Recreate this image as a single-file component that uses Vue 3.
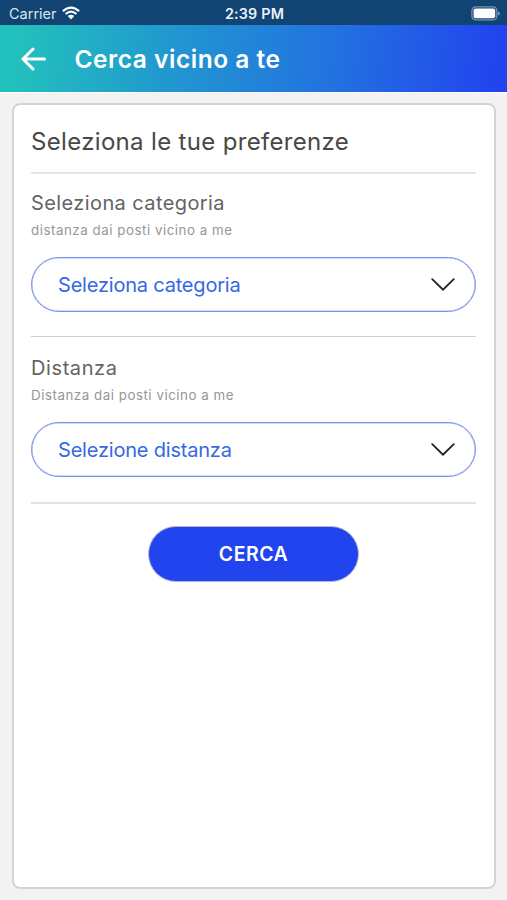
<script setup>
const fields = [
  { title: 'Seleziona categoria', hint: 'distanza dai posti vicino a me', value: 'Seleziona categoria', key: 'category' },
  { title: 'Distanza', hint: 'Distanza dai posti vicino a me', value: 'Selezione distanza', key: 'distance' },
]
</script>

<template>
  <div class="screen">
    <div class="status">
      <div class="carrier">
        <span class="carrier-name">Carrier</span>
        <svg class="wifi" width="18" height="14" viewBox="0 0 18 14">
          <path d="M0.9 5.1Q9-2 17.1 5.1" />
          <path d="M3.6 8Q9 3.4 14.4 8" />
          <path class="dot" d="M5.8 10Q9 7.3 12.2 10L9 13.4Z" />
        </svg>
      </div>
      <span class="time">2:39 PM</span>
      <svg class="battery" width="29" height="15" viewBox="0 0 29 15">
        <rect class="shell" x="0.9" y="0.9" width="25" height="13" rx="4" />
        <rect class="charge" x="2.6" y="2.6" width="21.6" height="9.6" rx="2" />
        <path class="tip" d="M27 5.2Q29 6 29 7.4T27 9.6Z" />
      </svg>
    </div>

    <header class="header">
      <svg class="back" width="26" height="24" viewBox="0 0 26 24">
        <path d="M23.5 12H2M12 2L2 12L12 22" />
      </svg>
      <h1 class="page-title">Cerca vicino a te</h1>
    </header>

    <main class="card">
      <h2 class="heading">Seleziona le tue preferenze</h2>
      <section v-for="field in fields" :key="field.key" class="field" :class="field.key">
        <div class="label"><span>{{ field.title }}</span></div>
        <div class="hint"><span>{{ field.hint }}</span></div>
        <button class="select">
          <span class="value">{{ field.value }}</span>
          <svg class="chevron" width="24" height="14" viewBox="0 0 24 14">
            <path d="M1.2 1.2L12 11.7L22.8 1.2" />
          </svg>
        </button>
      </section>
      <button class="submit">CERCA</button>
    </main>
  </div>
</template>

<style>
body {
  background: #f2f2f2;
}
</style>

<style scoped>
.screen {
  box-sizing: border-box;
  height: 900px;
  display: flex;
  flex-direction: column;
  background: #f2f2f2;
  font-family: Inter, "Liberation Sans", sans-serif;
  overflow: hidden;
}
.status {
  height: 25px;
  box-sizing: border-box;
  padding: 2px 7px 0 9px;
  display: grid;
  grid-template-columns: 1fr auto 1fr;
  align-items: center;
  background: #124473;
  color: #fff;
}
.carrier {
  display: flex;
  align-items: center;
  gap: 5px;
}
.carrier-name {
  font-size: 14.5px;
  line-height: 20px;
  color: #d7e4f0;
}
.wifi {
  margin-top: -1px;
  fill: none;
  stroke: #fff;
  stroke-width: 2.1;
}
.wifi .dot {
  fill: #fff;
  stroke: none;
}
.time {
  font-size: 14.3px;
  font-weight: 600;
  letter-spacing: 0.2px;
  color: #e9f2f8;
}
.battery {
  justify-self: end;
  margin-right: 0.5px;
}
.shell {
  fill: none;
  stroke: #7795b0;
  stroke-width: 1.3;
}
.charge {
  fill: #fff;
}
.tip {
  fill: #7795b0;
}
.header {
  height: 67px;
  padding-left: 21px;
  display: flex;
  align-items: center;
  gap: 27.5px;
  background: linear-gradient(95deg, #22c0bd 4%, #2196d0 35%, #2274df 64%, #2244ee 98%);
  box-shadow: 0 1px 1px #fff;
  color: #fff;
}
.back {
  margin-top: 1px;
  fill: none;
  stroke: #fff;
  stroke-width: 3;
  stroke-linecap: round;
  stroke-linejoin: round;
}
.page-title {
  margin: 0;
  padding-top: 1px;
  font-size: 24.5px;
  line-height: 30px;
  font-weight: 600;
  letter-spacing: 0.52px;
  white-space: nowrap;
}
.card {
  box-sizing: border-box;
  width: 484px;
  height: 786px;
  margin: 11px 0 0 12px;
  padding: 0 18px;
  border: 2px solid #d4d4d4;
  border-radius: 8px;
  background: #fff;
  display: flex;
  flex-direction: column;
}
.heading {
  box-sizing: border-box;
  height: 69px;
  padding-top: 22px;
  border-bottom: 2px solid #e6e6e6;
  font-size: 24px;
  line-height: 30px;
  font-weight: 400;
  letter-spacing: 0.33px;
  color: #484848;
  white-space: nowrap;
}
.heading,
.field {
  margin: 0 0 0 -1px;
}
.field {
  box-sizing: border-box;
  height: 163px;
  padding-top: 16px;
  display: flex;
  flex-direction: column;
  border-bottom: 1px solid #d2d2d2;
}
.distance {
  height: 167px;
  padding-top: 18px;
  border-bottom: 2px solid #e3e3e3;
}
.label {
  height: 27px;
  font-size: 20px;
  line-height: 27px;
  letter-spacing: 0.4px;
  color: #646464;
}
.distance .label {
  letter-spacing: 0.6px;
}
.hint {
  height: 26px;
  font-size: 13.3px;
  line-height: 26px;
  letter-spacing: 0.54px;
  color: #969696;
}
.select {
  box-sizing: border-box;
  height: 55px;
  margin-top: 14px;
  padding: 1px 20px 0 26px;
  border: 1px solid #7d8fea;
  box-shadow: inset 0 0 0 0.6px #a9b5f2;
  border-radius: 28px;
  background: #fff;
  display: flex;
  flex-shrink: 0;
  align-items: center;
  justify-content: space-between;
  font-family: Inter, "Liberation Sans", sans-serif;
}
.value {
  font-size: 20px;
  line-height: 28px;
  letter-spacing: -0.2px;
  color: #3568e3;
}
.chevron {
  fill: none;
  stroke: #222;
  stroke-width: 1.8;
  stroke-linecap: round;
}
.submit {
  box-sizing: border-box;
  align-self: center;
  width: 211px;
  height: 56px;
  margin: 22px 1px 0 0;
  padding: 0;
  border: 1.5px solid #b3b9d6;
  border-radius: 28px;
  background: #2244ee;
  color: #fff;
  font-family: Inter, "Liberation Sans", sans-serif;
  font-size: 19.5px;
  font-weight: 600;
  letter-spacing: 0.5px;
}
</style>
